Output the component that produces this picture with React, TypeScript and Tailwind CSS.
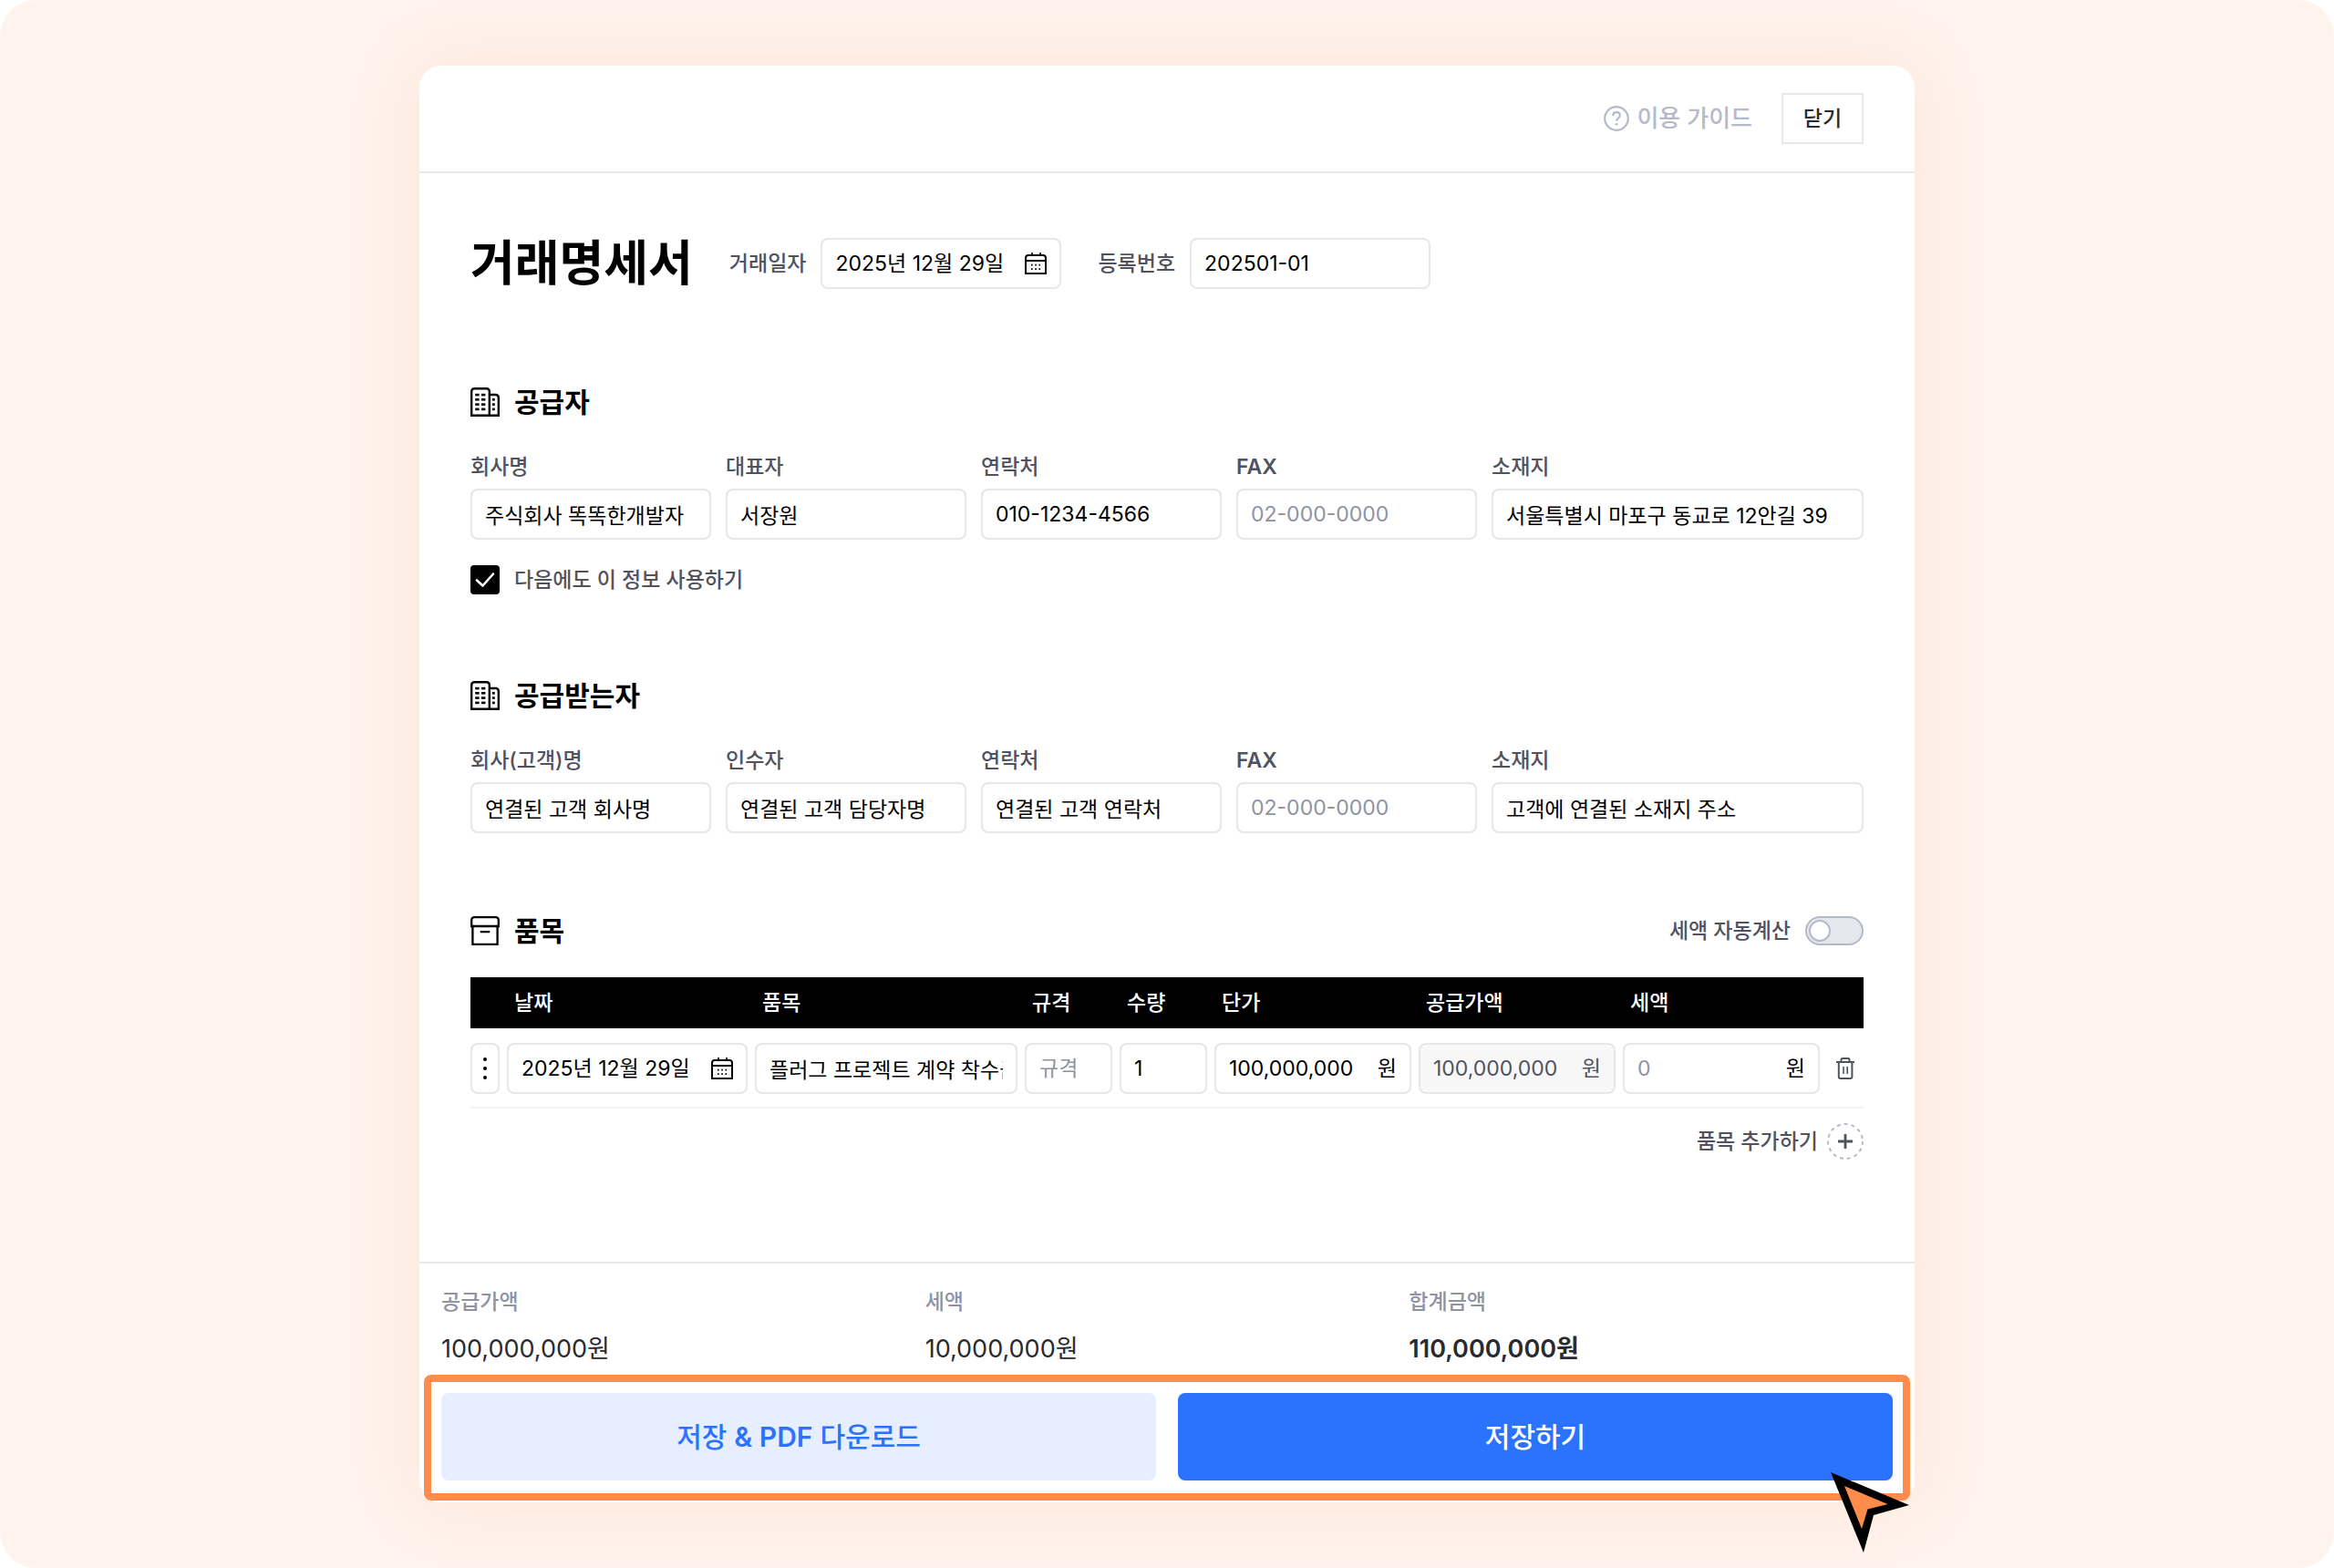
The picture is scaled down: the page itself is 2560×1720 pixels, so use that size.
import { useState } from "react";
import type { ReactNode } from "react";
import { clsx } from "clsx";

const BOX = "h-14 rounded-[8px] border-2 border-[#e6e7ed] bg-white text-[23px] leading-8 text-black";
const LABEL = "text-[23px] leading-8 font-medium text-[#50535f]";

function BuildingIcon() {
  const rows = [6.8, 12, 17.3, 22.6];
  return (
    <svg className="size-8 shrink-0" viewBox="0 0 32 32" fill="none" stroke="currentColor" strokeWidth="2.4" aria-hidden="true">
      <path d="M1.200 31V4.200a3 3 0 0 1 3-3h13.600a3 3 0 0 1 3 3V31M21 8h6.800a3 3 0 0 1 3 3v20M0 30.800h32" />
      <g fill="currentColor" stroke="none">
        {rows.map((y) => (
          <g key={y}>
            <rect x="5.2" y={y} width="4.4" height="2.6" />
            <rect x="12" y={y} width="4.4" height="2.6" />
            {y > 7 && <rect x="24" y={y} width="2.8" height="2.6" />}
          </g>
        ))}
      </g>
    </svg>
  );
}

function ArchiveIcon() {
  return (
    <svg className="size-8 shrink-0" viewBox="0 0 32 32" fill="none" stroke="currentColor" strokeWidth="2.3" aria-hidden="true">
      <path d="M1.200 11V4.200a3 3 0 0 1 3-3h23.600a3 3 0 0 1 3 3V11zM2.400 11v19.800h27.200V11M10.800 17.200h10.400" />
    </svg>
  );
}

function CalendarIcon() {
  return (
    <svg className="size-6" viewBox="0 0 24 24" fill="none" stroke="currentColor" strokeWidth="2" aria-hidden="true">
      <path d="M1 23V6a3 3 0 0 1 3-3h16a3 3 0 0 1 3 3v17zM1 9h22" />
      <path d="M8 0v3M17 0v3" strokeWidth="1.6" />
      <g fill="currentColor" stroke="none">
        {[7, 11.2, 15.4].map((x) => (
          <g key={x}>
            <rect x={x} y="12.8" width="1.7" height="1.7" />
            <rect x={x} y="17.3" width="1.7" height="1.7" />
          </g>
        ))}
      </g>
    </svg>
  );
}

function TrashIcon() {
  return (
    <svg className="size-6" viewBox="0 0 24 24" fill="none" stroke="currentColor" strokeWidth="2" aria-hidden="true">
      <path d="M2 5h20M7.500 5V2.500A1.500 1.500 0 0 1 9 1h6a1.500 1.500 0 0 1 1.500 1.500V5M4.800 5v16a2 2 0 0 0 2 2h10.600a2 2 0 0 0 2-2V5" />
      <path d="M10 10v8M14.200 10v8" strokeWidth="1.6" />
    </svg>
  );
}

function HelpIcon() {
  return (
    <svg className="size-7" viewBox="0 0 28 28" fill="none" stroke="currentColor" strokeWidth="2.2" aria-hidden="true">
      <circle cx="14" cy="14" r="12.800" />
      <path d="M10.200 11c0-2.200 1.600-3.800 3.800-3.800s3.800 1.500 3.800 3.500c0 2.800-3.700 3.100-3.700 6" />
      <circle cx="14.100" cy="20.300" r="1.400" fill="currentColor" stroke="none" />
    </svg>
  );
}

function CursorIcon() {
  return (
    <svg className="absolute right-1 -bottom-14 h-[92px] w-[90px]" viewBox="0 0 90 92" aria-hidden="true">
      <path d="M2 3 88 39 49 50 38 91z" fill="#000" />
      <path d="M17 18 64.500 38 42.500 43.500 36 65z" fill="#ff8c4a" />
    </svg>
  );
}

type FieldProps = { id: string; label: string; value?: string; placeholder?: string };

function Field({ id, label, value, placeholder }: FieldProps) {
  return (
    <div className="flex min-w-0 flex-col gap-2">
      <label htmlFor={id} className={clsx("text-[23px] leading-8 text-[#50535f]", label === "FAX" ? "font-semibold" : "font-medium")}>{label}</label>
      <input
        id={id}
        type="text"
        defaultValue={value}
        placeholder={placeholder}
        className={clsx(BOX, "w-full px-[14px] placeholder:text-[#8e93a3]")}
      />
    </div>
  );
}

function FieldGrid({ fields }: { fields: FieldProps[] }) {
  return (
    <div className="grid grid-cols-[264fr_264fr_264fr_264fr_408fr] gap-4">
      {fields.map((f) => <Field key={f.id} {...f} />)}
    </div>
  );
}

function DateBox({ id, label }: { id: string; label?: string }) {
  return (
    <div className={clsx(BOX, "flex w-[264px] items-center px-[14px]")}>
      <input id={id} type="text" aria-label={label} defaultValue="2025년 12월 29일" className="w-0 flex-1 bg-transparent outline-none" />
      <button type="button" aria-label="달력 열기"><CalendarIcon /></button>
    </div>
  );
}

function MoneyBox({ label, value, placeholder, muted }: { label: string; value?: string; placeholder?: string; muted?: boolean }) {
  return (
    <div className={clsx("flex h-14 items-center rounded-[8px] border-2 border-[#e6e7ed] px-[14px] text-[23px] leading-8", muted ? "bg-[#f7f7f7] text-[#50535f]" : "bg-white text-black")}>
      <input
        type="text"
        aria-label={label}
        defaultValue={value}
        placeholder={placeholder}
        readOnly={muted}
        className="w-0 flex-1 bg-transparent outline-none placeholder:text-[#8e93a3]"
      />
      <span>원</span>
    </div>
  );
}

function SectionTitle({ icon, children }: { icon: ReactNode; children: ReactNode }) {
  return (
    <h2 className="flex h-8 items-center gap-4 text-[30px] leading-8 font-bold text-black">
      {icon}
      {children}
    </h2>
  );
}

function Total({ label, value, strong }: { label: string; value: string; strong?: boolean }) {
  return (
    <div>
      <dt className="text-[23px] leading-8 font-medium text-[#8e93a3]">{label}</dt>
      <dd className={clsx("mt-5 text-[27px] leading-8 text-[#2a2b31]", strong && "font-semibold")}>{value}</dd>
    </div>
  );
}

const COLUMNS = ["날짜", "품목", "규격", "수량", "단가", "공급가액", "세액"];

export default function App() {
  const [keep, setKeep] = useState(true);
  const [autoTax, setAutoTax] = useState(false);

  return (
    <div className="min-h-screen bg-white font-[Inter,'Noto_Sans_CJK_KR',sans-serif]">
      <div className="min-h-screen rounded-[40px] bg-[#fef3ed] py-[72px]">
        <div className="relative mx-auto w-full max-w-[1640px] rounded-[24px] bg-white shadow-[0_0_80px_rgba(255,140,74,0.14)]">
          <header className="flex items-center justify-end gap-8 border-b-2 border-[#e6e7ed] px-14 py-[30px]">
            <a href="#guide" className="flex items-center gap-2 text-[26px] leading-8 font-medium text-[#b5bac8]">
              <HelpIcon />
              이용 가이드
            </a>
            <button type="button" className="h-14 w-[90px] border-2 border-[#e6e7ed] bg-white text-[23px] font-medium text-[#2a2b31]">닫기</button>
          </header>

          <main className="px-14 pt-[71px] pb-28">
            <div className="flex h-14 items-center gap-10">
              <h1 className="text-[53px] leading-14 font-bold text-black">거래명세서</h1>
              <div className="flex items-center gap-4">
                <label htmlFor="trade-date" className={LABEL}>거래일자</label>
                <DateBox id="trade-date" />
              </div>
              <div className="flex items-center gap-4">
                <label htmlFor="reg-no" className={LABEL}>등록번호</label>
                <input id="reg-no" type="text" defaultValue="202501-01" className={clsx(BOX, "w-[264px] px-[14px]")} />
              </div>
            </div>

            <section className="mt-[108px]">
              <SectionTitle icon={<BuildingIcon />}>공급자</SectionTitle>
              <div className="mt-[39px]">
                <FieldGrid
                  fields={[
                    { id: "s-company", label: "회사명", value: "주식회사 똑똑한개발자" },
                    { id: "s-owner", label: "대표자", value: "서장원" },
                    { id: "s-phone", label: "연락처", value: "010-1234-4566" },
                    { id: "s-fax", label: "FAX", placeholder: "02-000-0000" },
                    { id: "s-address", label: "소재지", value: "서울특별시 마포구 동교로 12안길 39" },
                  ]}
                />
              </div>
              <label className={clsx(LABEL, "mt-7 flex w-fit items-center gap-4")}>
                <span className="relative size-8">
                  <input
                    type="checkbox"
                    checked={keep}
                    onChange={(e) => setKeep(e.target.checked)}
                    className="block size-8 appearance-none rounded-[4px] border-2 border-black bg-white checked:bg-black"
                  />
                  <svg className="pointer-events-none absolute inset-0 size-8" viewBox="0 0 32 32" fill="none" stroke="#fff" strokeWidth="2.6" strokeLinecap="round" strokeLinejoin="round" aria-hidden="true">
                    <path d="M7 16.500 13.500 22.500 25 9.500" />
                  </svg>
                </span>
                다음에도 이 정보 사용하기
              </label>
            </section>

            <section className="mt-[95px]">
              <SectionTitle icon={<BuildingIcon />}>공급받는자</SectionTitle>
              <div className="mt-[39px]">
                <FieldGrid
                  fields={[
                    { id: "r-company", label: "회사(고객)명", value: "연결된 고객 회사명" },
                    { id: "r-owner", label: "인수자", value: "연결된 고객 담당자명" },
                    { id: "r-phone", label: "연락처", value: "연결된 고객 연락처" },
                    { id: "r-fax", label: "FAX", placeholder: "02-000-0000" },
                    { id: "r-address", label: "소재지", value: "고객에 연결된 소재지 주소" },
                  ]}
                />
              </div>
            </section>

            <section className="mt-[91px]">
              <div className="flex items-center justify-between">
                <SectionTitle icon={<ArchiveIcon />}>품목</SectionTitle>
                <label className={clsx(LABEL, "flex items-center gap-4")}>
                  세액 자동계산
                  <input
                    type="checkbox"
                    role="switch"
                    checked={autoTax}
                    onChange={(e) => setAutoTax(e.target.checked)}
                    className="flex h-8 w-16 appearance-none items-center rounded-full border-2 border-[#b5bac8] bg-[#e6e7ed] px-[2px] before:size-6 before:rounded-full before:border-2 before:border-[#b5bac8] before:bg-white before:content-[''] checked:justify-end checked:bg-[#2b72ff]"
                  />
                </label>
              </div>

              <table className="mt-[35px] w-full table-fixed border-collapse">
                <colgroup>
                  <col className="w-[36px]" />
                  <col className="w-[272px]" />
                  <col />
                  <col className="w-[104px]" />
                  <col className="w-[104px]" />
                  <col className="w-[224px]" />
                  <col className="w-[224px]" />
                  <col className="w-[224px]" />
                  <col className="w-[44px]" />
                </colgroup>
                <thead>
                  <tr className="h-14 bg-black text-left text-[23px] leading-8 text-white">
                    <td />
                    {COLUMNS.map((c) => <th key={c} scope="col" className="pl-3 font-medium">{c}</th>)}
                    <td />
                  </tr>
                </thead>
                <tbody>
                  <tr className="border-b-2 border-[#f3f3f5]">
                    <td className="pt-4 pr-1 pb-[14px]">
                      <button type="button" aria-label="행 메뉴" className={clsx(BOX, "flex w-8 items-center justify-center")}>
                        <svg className="h-6 w-1 shrink-0" viewBox="0 0 4 24" fill="currentColor" aria-hidden="true">
                          <circle cx="2" cy="2" r="2" />
                          <circle cx="2" cy="12" r="2" />
                          <circle cx="2" cy="22" r="2" />
                        </svg>
                      </button>
                    </td>
                    <td className="px-1 pt-4 pb-[14px]"><DateBox id="item-date" label="날짜" /></td>
                    <td className="px-1 pt-4 pb-[14px]">
                      <input type="text" aria-label="품목" defaultValue="플러그 프로젝트 계약 착수금" className={clsx(BOX, "block w-full px-[14px]")} />
                    </td>
                    <td className="px-1 pt-4 pb-[14px]">
                      <input type="text" aria-label="규격" placeholder="규격" className={clsx(BOX, "block w-full px-[14px] placeholder:text-[#8e93a3]")} />
                    </td>
                    <td className="px-1 pt-4 pb-[14px]">
                      <input type="text" aria-label="수량" defaultValue="1" className={clsx(BOX, "block w-full px-[14px]")} />
                    </td>
                    <td className="px-1 pt-4 pb-[14px]"><MoneyBox label="단가" value="100,000,000" /></td>
                    <td className="px-1 pt-4 pb-[14px]"><MoneyBox label="공급가액" value="100,000,000" muted /></td>
                    <td className="px-1 pt-4 pb-[14px]"><MoneyBox label="세액" placeholder="0" /></td>
                    <td className="pt-4 pb-[14px] pl-1">
                      <button type="button" aria-label="삭제" className="flex size-10 items-center justify-center text-[#50535f]"><TrashIcon /></button>
                    </td>
                  </tr>
                </tbody>
              </table>

              <button type="button" className={clsx(LABEL, "mt-4 ml-auto flex items-center gap-[10px]")}>
                품목 추가하기
                <svg className="size-10" viewBox="0 0 40 40" fill="none" aria-hidden="true">
                  <circle cx="20" cy="20" r="19" stroke="#b5bac8" strokeWidth="2" strokeDasharray="4 3.960" />
                  <path d="M12 20h16M20 12v16" stroke="#50535f" strokeWidth="2.800" />
                </svg>
              </button>
            </section>
          </main>

          <footer className="border-t-2 border-[#e6e7ed] px-[5px] pt-[26px] pb-[2px]">
            <dl className="grid grid-cols-3 px-[19px]">
              <Total label="공급가액" value="100,000,000원" />
              <Total label="세액" value="10,000,000원" />
              <Total label="합계금액" value="110,000,000원" strong />
            </dl>
            <div className="mt-3 grid grid-cols-2 gap-6 rounded-[8px] border-8 border-[#ff8c4a] px-[11px] pt-3 pb-[14px]">
              <button type="button" className="h-24 rounded-[8px] bg-[#e7eeff] text-[30px] font-medium text-[#2b72ff]">저장 <span className="font-semibold">&amp; PDF</span> 다운로드</button>
              <button type="button" className="h-24 rounded-[8px] bg-[#2b72ff] text-[30px] font-medium text-white">저장하기</button>
            </div>
          </footer>
          <CursorIcon />
        </div>
      </div>
    </div>
  );
}
